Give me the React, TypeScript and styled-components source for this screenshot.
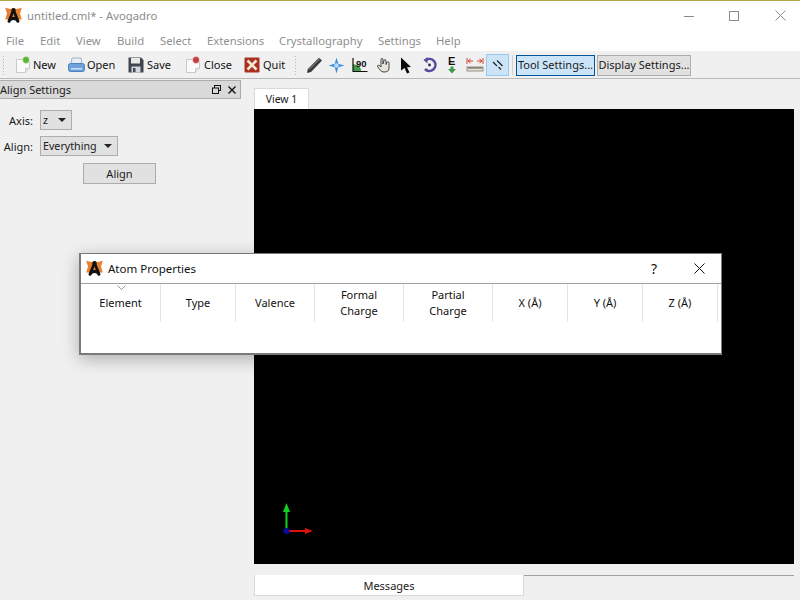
import React from 'react';
import styled, { createGlobalStyle } from 'styled-components';

const Global = createGlobalStyle`
  html, body { margin: 0; padding: 0; }
  body { font-family: 'Noto Sans', 'Open Sans', sans-serif; font-size: 11px; color: #1a1a1a; }
  #root { width: 800px; height: 600px; overflow: hidden; }
`;

const Win = styled.div`
  position: relative;
  width: 800px;
  height: 600px;
  background: #f0f0f0;
  display: flex;
  flex-direction: column;
  overflow: hidden;
`;

const TitleBar = styled.div`
  height: 30px;
  flex: none;
  box-sizing: border-box;
  border-top: 1px solid #b3a648;
  background: #fff;
  display: flex;
  align-items: center;
  padding-left: 5px;
  color: #8c8c8c;
  font-size: 11.3px;
`;
const TitleText = styled.span`
  margin-left: 5px;
  flex: 1;
`;
const WinBtn = styled.div<{ $w: number }>`
  width: ${p => p.$w}px;
  height: 29px;
  display: flex;
  align-items: center;
  justify-content: center;
`;
const MenuBar = styled.div`
  height: 21px;
  flex: none;
  background: #fff;
  display: flex;
  align-items: center;
  padding-left: 6px;
  color: #8f8f8f;
  font-size: 11.3px;
  border-bottom: 1px solid #f0f0f0;
`;
const MenuItem = styled.span<{ $w: number }>`
  width: ${p => p.$w}px;
  flex: none;
`;
const ToolBar = styled.div`
  height: 27px;
  flex: none;
  box-sizing: border-box;
  background: #f0f0f0;
  border-bottom: 1px solid #b9b9b9;
  display: flex;
  align-items: center;
`;
const Handle = styled.div<{ $ml: number; $mr: number }>`
  width: 3px;
  height: 20px;
  flex: none;
  margin-left: ${p => p.$ml}px;
  margin-right: ${p => p.$mr}px;
  background-image: radial-gradient(circle, #b4b4b4 0.8px, transparent 0.9px);
  background-size: 3px 3px;
`;
const ActionBtn = styled.div<{ $w: number; $gap: number }>`
  width: ${p => p.$w}px;
  flex: none;
  display: flex;
  align-items: center;
  gap: ${p => p.$gap}px;
  color: #111;
  span {
    position: relative;
    top: -1px;
  }
`;
const ToolIcon = styled.div<{ $w: number; $active?: boolean }>`
  width: ${p => p.$w}px;
  height: 22px;
  flex: none;
  box-sizing: border-box;
  display: flex;
  align-items: center;
  justify-content: center;
  background: ${p => (p.$active ? '#cce4f7' : 'transparent')};
  border: 1px solid ${p => (p.$active ? '#99c9ef' : 'transparent')};
`;
const Sep = styled.div`
  width: 1px;
  height: 20px;
  background: #d0d0d0;
  margin: 0 3px 0 3px;
  flex: none;
`;
const TextBtn = styled.div<{ $w: number; $active?: boolean }>`
  width: ${p => p.$w}px;
  height: 21px;
  flex: none;
  box-sizing: border-box;
  display: flex;
  align-items: center;
  justify-content: center;
  white-space: nowrap;
  margin-right: 2px;
  padding-bottom: 1px;
  background: ${p => (p.$active ? '#cce4f7' : '#e1e1e1')};
  border: 1px solid ${p => (p.$active ? '#005499' : '#adadad')};
`;

const Body = styled.div`
  flex: 1;
  display: flex;
  min-height: 0;
`;
const Dock = styled.div`
  width: 254px;
  flex: none;
  padding-top: 1px;
  box-sizing: border-box;
`;
const DockTitle = styled.div`
  width: 241px;
  height: 19px;
  box-sizing: border-box;
  background: #d9d9d9;
  border: 1px solid #adadad;
  border-left: none;
  display: flex;
  align-items: center;
`;
const DockTitleText = styled.span`
  flex: 1;
`;
const DockIcon = styled.div`
  width: 16px;
  height: 16px;
  display: flex;
  align-items: center;
  justify-content: center;
`;
const Form = styled.div`
  display: grid;
  grid-template-columns: 33px auto;
  row-gap: 6px;
  column-gap: 7px;
  padding: 11px 0 0 0;
  justify-content: start;
  align-items: center;
`;
const FormLabel = styled.div`
  text-align: right;
`;
const Combo = styled.div<{ $w: number }>`
  width: ${p => p.$w}px;
  height: 20px;
  box-sizing: border-box;
  background: #e1e1e1;
  border: 1px solid #adadad;
  display: flex;
  align-items: center;
  justify-content: space-between;
  padding: 0 5px 0 2px;
  font-size: 10.7px;
`;
const Caret = styled.span`
  width: 0;
  height: 0;
  border-left: 4px solid transparent;
  border-right: 4px solid transparent;
  border-top: 4px solid #222;
`;
const AlignRow = styled.div`
  display: flex;
  padding-left: 83px;
  margin-top: 7px;
`;
const PushBtn = styled.div`
  width: 73px;
  height: 21px;
  box-sizing: border-box;
  background: #e1e1e1;
  border: 1px solid #adadad;
  display: flex;
  align-items: center;
  justify-content: center;
`;

const Center = styled.div`
  width: 540px;
  flex: none;
  display: flex;
  flex-direction: column;
`;
const TabStrip = styled.div`
  height: 30px;
  flex: none;
  display: flex;
  align-items: flex-end;
`;
const Tab = styled.div`
  width: 55px;
  height: 21px;
  box-sizing: border-box;
  background: #fff;
  border: 1px solid #d9d9d9;
  border-bottom: none;
  padding-bottom: 1px;
  display: flex;
  align-items: center;
  justify-content: center;
  font-size: 10.5px;
`;
const Canvas = styled.div`
  height: 455px;
  flex: none;
  background: #000;
  position: relative;
`;
const Axes = styled.svg`
  position: absolute;
  left: 26px;
  bottom: 26px;
`;
const BottomTabs = styled.div`
  margin-top: 11px;
  display: flex;
  align-items: flex-start;
`;
const MessagesTab = styled.div`
  width: 270px;
  height: 21px;
  box-sizing: border-box;
  background: #fff;
  border: 1px solid #d9d9d9;
  border-top: none;
  display: flex;
  align-items: center;
  justify-content: center;
`;
const TabLine = styled.div`
  flex: 1;
  height: 1px;
  background: #a0a0a0;
`;

const Dialog = styled.div`
  position: absolute;
  left: 79px;
  top: 253px;
  width: 643px;
  height: 102px;
  box-sizing: border-box;
  background: #fff;
  border: 1px solid #7a7a7a;
  border-left-width: 2px;
  border-bottom-width: 2px;
  box-shadow: 0 4px 16px rgba(0, 0, 0, 0.28);
`;
const DialogTitle = styled.div`
  height: 30px;
  box-sizing: border-box;
  display: flex;
  align-items: center;
  padding: 0 0 1px 5px;
  border-bottom: 1px solid #a0a0a0;
  font-size: 11.5px;
  color: #111;
`;
const DialogTitleText = styled.span`
  flex: 1;
  margin-left: 5px;
`;
const DialogBtn = styled.div<{ $w: number }>`
  width: ${p => p.$w}px;
  display: flex;
  justify-content: center;
  align-items: center;
  font-size: 14px;
`;
const HeaderRow = styled.div`
  display: flex;
  height: 38px;
`;
const HeaderCell = styled.div<{ $w: number }>`
  position: relative;
  width: ${p => p.$w}px;
  flex: none;
  box-sizing: border-box;
  border-right: 1px solid #e5e5e5;
  display: flex;
  align-items: center;
  justify-content: center;
  text-align: center;
  line-height: 16px;
  white-space: pre-line;
  color: #111;
`;
const SortMark = styled.svg`
  position: absolute;
  top: 1px;
  left: 36px;
`;

const Logo = () => (
  <svg width="17" height="17" viewBox="0 0 17 17">
    <path d="M0.2 0.8 L5 2 L8.5 1.5 L12 2 L16.8 0.8 L15 6.5 L16.8 12.5 L12 12.5 L5 12.5 L0.2 12.5 L2 6.5 Z" fill="#e8802f" />
    <path d="M7 3 H10 L14.3 13.5 A1.5 1.5 0 0 1 11.6 15 C11 12.2 6 12.2 5.4 15 A1.5 1.5 0 0 1 2.7 13.5 Z M8.5 6.5 L7.2 10 H9.8 Z" fill="#111" fillRule="evenodd" />
    <circle cx="8.5" cy="3.2" r="2.1" fill="#111" />
  </svg>
);

const Doc = ({ dot }: { dot: string }) => (
  <svg width="18" height="18" viewBox="0 0 18 18">
    <path d="M1.5 3.5 H10 L14.5 6 V12 L10.5 16.5 H1.5 Z" fill="#fafafa" stroke="#c9c9c9" />
    <path d="M10.5 16.5 L10.5 12.5 L14.5 12" fill="#e6e6e6" stroke="#c9c9c9" />
    <circle cx="11" cy="4" r="3.4" fill={dot} stroke="#fff" strokeWidth="0.4" />
  </svg>
);
const PrintIcon = () => (
  <svg width="17" height="16" viewBox="0 0 17 16">
    <path d="M4 1 H13 L14 7 H3 Z" fill="#e8eef6" stroke="#9fb4cf" />
    <rect x="0.5" y="6.5" width="16" height="8" rx="2" fill="#6ea2dc" stroke="#4d80bf" />
    <rect x="3" y="11" width="11" height="1.5" fill="#cfe0f4" />
  </svg>
);
const SaveIcon = () => (
  <svg width="16" height="16" viewBox="0 0 16 16">
    <path d="M0.5 0.5 H13 L15.5 3 V15.5 H0.5 Z" fill="#3f4650" />
    <rect x="3" y="1" width="9" height="5.5" fill="#e8e8e8" />
    <rect x="3.5" y="9.5" width="9" height="6" fill="#d4d6d8" />
    <rect x="5" y="11" width="2.5" height="4" fill="#3f4650" />
  </svg>
);
const QuitIcon = () => (
  <svg width="16" height="16" viewBox="0 0 16 16">
    <rect x="0.5" y="0.5" width="15" height="15" rx="1" fill="#a8321e" />
    <path d="M3.5 3.5 L12.5 12.5 M12.5 3.5 L3.5 12.5" stroke="#f3e6d8" strokeWidth="2.6" />
  </svg>
);
const PenIcon = () => (
  <svg width="17" height="17" viewBox="0 0 17 17">
    <path d="M1 16 L1.8 12 L13 0.8 L16 3.6 L5 15 Z" fill="#3a3a3a" />
    <path d="M3 12.5 L13.5 2" stroke="#999" strokeWidth="1" />
  </svg>
);
const StarIcon = () => (
  <svg width="17" height="17" viewBox="0 0 17 17">
    <path d="M8.5 0.5 L10.3 6.7 L16.5 8.5 L10.3 10.3 L8.5 16.5 L6.7 10.3 L0.5 8.5 L6.7 6.7 Z" fill="#3f8fe0" />
    <circle cx="8.5" cy="8.5" r="2.2" fill="#bcdcf8" />
  </svg>
);
const AngleIcon = () => (
  <svg width="16" height="16" viewBox="0 0 16 16">
    <path d="M1 7 V14 L9 14 C9 10 6 8 1 7 Z" fill="#3f9a4a" />
    <path d="M1 1 V14.5 H15.5" stroke="#111" strokeWidth="1.2" fill="none" />
    <text x="4" y="9.5" fontSize="9.5" fontWeight="700" fontFamily="Liberation Sans" fill="#111">90</text>
  </svg>
);
const HandIcon = () => (
  <svg width="15" height="16" viewBox="0 0 15 16">
    <path d="M5 8 V2.5 a1 1 0 0 1 2 0 V7 L8 3.5 a1 1 0 0 1 2 .5 V7.5 L11 5.5 a1 1 0 0 1 2 .8 V11 C13 14 11 15 8 15 C5 15 4 13 1.5 9.5 C1 8 3 7.5 5 10 Z" fill="#e8e4dc" stroke="#444" strokeWidth="1" />
  </svg>
);
const ArrowIcon = () => (
  <svg width="12" height="17" viewBox="0 0 12 17">
    <path d="M1 0.5 L11 10 L7 10.3 L9.5 15.5 L7 16.5 L4.5 11 L1 13.5 Z" fill="#0a0a0a" />
  </svg>
);
const RotateIcon = () => (
  <svg width="15" height="16" viewBox="0 0 15 16">
    <path d="M4 3 A6 6 0 1 1 3 12" stroke="#5a4a9e" strokeWidth="2.6" fill="none" />
    <path d="M5.5 0 V6.5 L1.5 3 Z" fill="#5a4a9e" />
    <circle cx="7.5" cy="8" r="1.4" fill="#2f2a55" />
  </svg>
);
const EnergyIcon = () => (
  <svg width="12" height="18" viewBox="0 0 12 18">
    <text x="2" y="9" fontSize="11" fontWeight="700" fontFamily="Liberation Sans" fill="#111">E</text>
    <path d="M4.5 10.5 H7.5 V13 H10 L6 17.5 L2 13 H4.5 Z" fill="#3f9a4a" />
  </svg>
);
const RulerIcon = () => (
  <svg width="18" height="16" viewBox="0 0 18 16">
    <path d="M1 1 V7 M17 1 V7 M2 4 H7 M11 4 H16 M2 4 L4.5 2 M2 4 L4.5 6 M16 4 L13.5 2 M16 4 L13.5 6" stroke="#d0442c" strokeWidth="1" fill="none" />
    <rect x="1" y="10" width="16" height="4" fill="#e9e4d2" stroke="#777" strokeWidth="0.8" />
    <path d="M3 10 V12 M5 10 V12 M7 10 V12 M9 10 V12 M11 10 V12 M13 10 V12 M15 10 V12" stroke="#333" strokeWidth="0.8" />
  </svg>
);
const BondIcon = () => (
  <svg width="14" height="14" viewBox="0 0 14 14">
    <path d="M2 4 L6 8 M6 2.5 L11.5 8 M7.5 9 L10 11.5" stroke="#222" strokeWidth="1.2" />
  </svg>
);
const Cross = ({ size, color, width = 1 }: { size: number; color: string; width?: number }) => (
  <svg width={size} height={size} viewBox={`0 0 ${size} ${size}`}>
    <path d={`M0.5 0.5 L${size - 0.5} ${size - 0.5} M${size - 0.5} 0.5 L0.5 ${size - 0.5}`} stroke={color} strokeWidth={width} fill="none" />
  </svg>
);

const columns = [
  { w: 80, label: 'Element' },
  { w: 75, label: 'Type' },
  { w: 79, label: 'Valence' },
  { w: 89, label: 'Formal\nCharge' },
  { w: 89, label: 'Partial\nCharge' },
  { w: 75, label: 'X (Å)' },
  { w: 75, label: 'Y (Å)' },
  { w: 75, label: 'Z (Å)' },
];
const menus: [string, number][] = [
  ['File', 34], ['Edit', 36], ['View', 41], ['Build', 43], ['Select', 47],
  ['Extensions', 72], ['Crystallography', 99], ['Settings', 58], ['Help', 40],
];

export default function App() {
  return (
    <Win>
      <Global />
      <TitleBar>
        <Logo />
        <TitleText>untitled.cml* - Avogadro</TitleText>
        <WinBtn $w={38}>
          <svg width="10" height="10" viewBox="0 0 10 10"><path d="M0 5.5 H10" stroke="#8a8a8a" /></svg>
        </WinBtn>
        <WinBtn $w={52}>
          <svg width="10" height="10" viewBox="0 0 10 10"><rect x="0.5" y="0.5" width="9" height="9" fill="none" stroke="#8a8a8a" /></svg>
        </WinBtn>
        <WinBtn $w={40}>
          <Cross size={11} color="#8a8a8a" />
        </WinBtn>
      </TitleBar>
      <MenuBar>
        {menus.map(([m, w]) => (
          <MenuItem key={m} $w={w}>{m}</MenuItem>
        ))}
      </MenuBar>
      <ToolBar>
        <Handle $ml={2} $mr={10} />
        <ActionBtn $w={53} $gap={0}><Doc dot="#5cb531" /><span>New</span></ActionBtn>
        <ActionBtn $w={60} $gap={2}><PrintIcon /><span>Open</span></ActionBtn>
        <ActionBtn $w={57} $gap={3}><SaveIcon /><span>Save</span></ActionBtn>
        <ActionBtn $w={59} $gap={1}><Doc dot="#c43c3c" /><span>Close</span></ActionBtn>
        <ActionBtn $w={50} $gap={3}><QuitIcon /><span>Quit</span></ActionBtn>
        <Handle $ml={0} $mr={6} />
        <ToolIcon $w={22}><PenIcon /></ToolIcon>
        <ToolIcon $w={23}><StarIcon /></ToolIcon>
        <ToolIcon $w={24}><AngleIcon /></ToolIcon>
        <ToolIcon $w={22}><HandIcon /></ToolIcon>
        <ToolIcon $w={24}><ArrowIcon /></ToolIcon>
        <ToolIcon $w={22}><RotateIcon /></ToolIcon>
        <ToolIcon $w={23}><EnergyIcon /></ToolIcon>
        <ToolIcon $w={23}><RulerIcon /></ToolIcon>
        <ToolIcon $w={23} $active><BondIcon /></ToolIcon>
        <Sep />
        <TextBtn $w={79} $active>Tool Settings...</TextBtn>
        <TextBtn $w={94}>Display Settings...</TextBtn>
      </ToolBar>
      <Body>
        <Dock>
          <DockTitle>
            <DockTitleText>Align Settings</DockTitleText>
            <DockIcon>
              <svg width="9" height="9" viewBox="0 0 9 9">
                <rect x="2.5" y="0.5" width="6" height="5" fill="none" stroke="#111" />
                <rect x="0.5" y="3" width="6" height="5.5" fill="#d9d9d9" stroke="#111" />
              </svg>
            </DockIcon>
            <DockIcon><Cross size={8} color="#111" width={1.4} /></DockIcon>
          </DockTitle>
          <Form>
            <FormLabel>Axis:</FormLabel>
            <Combo $w={32}>z<Caret /></Combo>
            <FormLabel>Align:</FormLabel>
            <Combo $w={78}>Everything<Caret /></Combo>
          </Form>
          <AlignRow><PushBtn>Align</PushBtn></AlignRow>
        </Dock>
        <Center>
          <TabStrip><Tab>View 1</Tab></TabStrip>
          <Canvas>
            <Axes width="36" height="36" viewBox="0 0 36 36">
              <path d="M5 29 H28" stroke="#e01010" strokeWidth="2" />
              <path d="M25 26 L33 29 L25 32 Z" fill="#e01010" />
              <path d="M6.5 29 V7" stroke="#10d020" strokeWidth="2" />
              <path d="M3 10 L6.5 1 L10 10 Z" fill="#10d020" />
              <circle cx="6.5" cy="29" r="3" fill="#0a0aa0" />
            </Axes>
          </Canvas>
          <BottomTabs>
            <MessagesTab>Messages</MessagesTab>
            <TabLine />
          </BottomTabs>
        </Center>
      </Body>
      <Dialog>
        <DialogTitle>
          <Logo />
          <DialogTitleText>Atom Properties</DialogTitleText>
          <DialogBtn $w={46}>?</DialogBtn>
          <DialogBtn $w={44}><Cross size={11} color="#111" /></DialogBtn>
        </DialogTitle>
        <HeaderRow>
          {columns.map((c, i) => (
            <HeaderCell key={c.label} $w={c.w}>
              {i === 0 && (
                <SortMark width="9" height="5" viewBox="0 0 9 5">
                  <path d="M0.5 0.5 L4.5 4.5 L8.5 0.5" stroke="#999" fill="none" />
                </SortMark>
              )}
              {c.label}
            </HeaderCell>
          ))}
        </HeaderRow>
      </Dialog>
    </Win>
  );
}
